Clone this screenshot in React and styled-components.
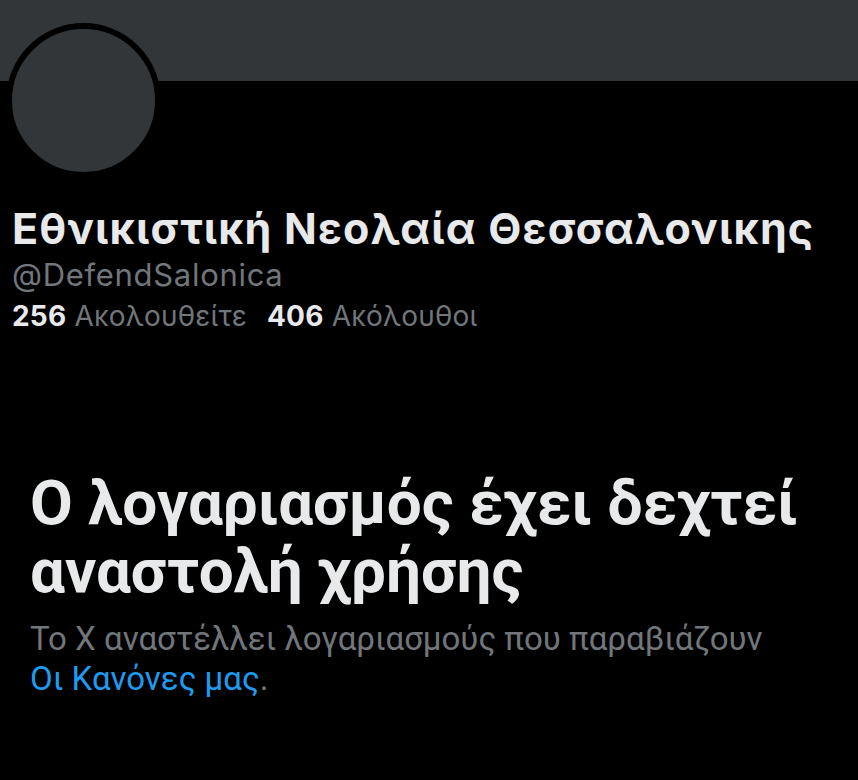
import styled, { createGlobalStyle } from "styled-components";

const GlobalStyle = createGlobalStyle`
    html, body {
        margin: 0;
        padding: 0;
        background: #000;
    }
    body {
        font-family: Inter, Roboto, "Noto Sans", sans-serif;
        -webkit-font-smoothing: antialiased;
    }
`

const App = () => {
    return (
        <>
            <GlobalStyle />
            <Page>
                <Banner />
                <Profile>
                    <Avatar />
                    <Name>Εθνικιστική Νεολαία Θεσσαλονικης</Name>
                    <Handle>@DefendSalonica</Handle>
                    <Stats>
                        <Stat>
                            <b>256</b> Ακολουθείτε
                        </Stat>
                        <Stat>
                            <b>406</b> Ακόλουθοι
                        </Stat>
                    </Stats>
                </Profile>
                <Notice>
                    <Title>Ο λογαριασμός έχει δεχτεί αναστολή χρήσης</Title>
                    <Message>
                        Το Χ αναστέλλει λογαριασμούς που παραβιάζουν
                        <br />
                        <RulesLink>Οι Κανόνες μας</RulesLink>.
                    </Message>
                </Notice>
            </Page>
        </>
    )
}

const Page = styled.div`
    width: 858px;
    height: 780px;
    background: #000;
    overflow: hidden;
`

const Banner = styled.div`
    height: 81px;
    background-color: #333639;
`

const Profile = styled.div`
    padding: 0 12px;
`

const Avatar = styled.div`
    width: 155px;
    height: 155px;
    margin: -58px 0 0 -6px;
    border: 6px solid #000;
    border-radius: 50%;
    background-color: #333639;
    box-sizing: border-box;
`

const Name = styled.h1`
    margin: 25px 0 0;
    font-size: 43px;
    line-height: 50px;
    font-weight: 700;
    letter-spacing: 1.2px;
    color: #e7e9ea;
    white-space: nowrap;
`

const Handle = styled.div`
    margin-top: 4px;
    font-size: 31px;
    line-height: 36px;
    letter-spacing: 0.7px;
    color: #71767b;
`

const Stats = styled.div`
    display: flex;
    gap: 20px;
    margin-top: 6px;
    font-size: 28px;
    line-height: 34px;
    letter-spacing: 0.2px;
`

const Stat = styled.span`
    color: #71767b;

    b {
        color: #e7e9ea;
        font-weight: 700;
    }
`

const Notice = styled.div`
    padding: 136px 30px 0;
    font-family: Roboto, "Noto Sans", sans-serif;
`

const Title = styled.h2`
    margin: 0;
    font-size: 62px;
    line-height: 68px;
    font-weight: 700;
    color: #e7e9ea;
`

const Message = styled.p`
    margin: 14px 0 0;
    font-size: 33px;
    line-height: 40px;
    color: #71767b;
    white-space: nowrap;
`

const RulesLink = styled.a`
    color: #1d9bf0;
    text-decoration: none;
`

export default App;
